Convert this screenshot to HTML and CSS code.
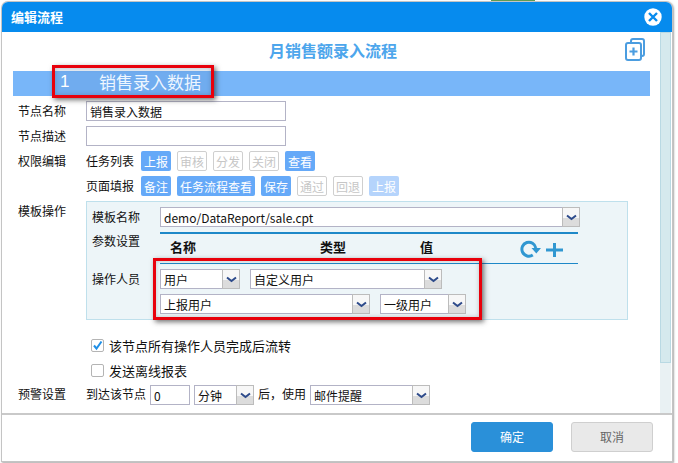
FILE: index.html
```html
<!DOCTYPE html>
<html lang="zh">
<head>
<meta charset="utf-8">
<title>编辑流程</title>
<link rel="stylesheet" href="styles.css">
</head>
<body>
<div class="peek"></div>
<div class="window">
  <header class="head">
    <span class="head-title">编辑流程</span>
    <span class="close">
      <svg width="18" height="18" viewBox="0 0 18 18"><circle cx="9" cy="9" r="8.7" fill="#fff"/><path d="M5 5l8 8M13 5l-8 8" stroke="#068bee" stroke-width="2.4" fill="none"/></svg>
    </span>
  </header>
  <div class="middle">
    <main class="content">
      <div class="title-row">
        <span></span>
        <h1 class="title">月销售额录入流程</h1>
        <span class="title-tool">
          <svg width="20" height="23" viewBox="0 0 20 23" fill="none" stroke="#4b9de0" stroke-width="2"><path d="M6 5V3a2 2 0 0 1 2-2h9a2 2 0 0 1 2 2v13a2 2 0 0 1-2 2h-1"/><rect x="1" y="5" width="15" height="17" rx="2"/><path d="M8.500 9.500v8M4.500 13.500h8" stroke-width="2.200"/></svg>
        </span>
      </div>
      <div class="band">
        <div class="callout callout-node">
          <span class="node-no">1</span>
          <span class="node-name">销售录入数据</span>
        </div>
      </div>

      <div class="row first">
        <label class="label">节点名称</label>
        <div class="input wide">销售录入数据</div>
      </div>
      <div class="row">
        <label class="label">节点描述</label>
        <div class="input wide"></div>
      </div>
      <div class="row">
        <label class="label">权限编辑</label>
        <span class="sub">任务列表</span>
        <div class="btns">
          <span class="btn on">上报</span><span class="btn off">审核</span><span class="btn off">分发</span><span class="btn off">关闭</span><span class="btn on">查看</span>
        </div>
      </div>
      <div class="row">
        <span class="label"></span>
        <span class="sub">页面填报</span>
        <div class="btns">
          <span class="btn on">备注</span><span class="btn on">任务流程查看</span><span class="btn on">保存</span><span class="btn off">通过</span><span class="btn off">回退</span><span class="btn faint">上报</span>
        </div>
      </div>

      <div class="row top">
        <label class="label label-panel">模板操作</label>
        <section class="panel">
          <div class="p-row">
            <span class="p-label">模板名称</span>
            <div class="sel s-tpl"><span class="val">demo/DataReport/sale.cpt</span><span class="arrow"><svg width="11" height="7" viewBox="0 0 11 7"><path d="M1 1.500l4.500 3.500 4.500-3.500" fill="none" stroke="#2d4a8a" stroke-width="2"/></svg></span></div>
          </div>
          <div class="p-row params">
            <span class="p-label p-label-param">参数设置</span>
            <div class="table-head">
              <b class="c1">名称</b><b class="c2">类型</b><b class="c3">值</b>
              <span class="tools">
                <svg width="44" height="18" viewBox="0 0 44 18" fill="none" stroke="#3097d1"><path d="M12.800 15A7 7 0 1 1 15.800 8" stroke-width="3"/><path d="M11.500 8h9.500l-4.700 5.500z" fill="#3097d1" stroke="none"/><path d="M34.500 3v14M26 10h17" stroke-width="3"/></svg>
              </span>
            </div>
          </div>
          <div class="p-row ops">
            <span class="p-label p-label-ops">操作人员</span>
            <div class="op-grid">
              <div class="op-line">
                <div class="sel s-a"><span class="val">用户</span><span class="arrow"><svg width="11" height="7" viewBox="0 0 11 7"><path d="M1 1.500l4.500 3.500 4.500-3.500" fill="none" stroke="#2d4a8a" stroke-width="2"/></svg></span></div>
                <div class="sel s-b"><span class="val">自定义用户</span><span class="arrow"><svg width="11" height="7" viewBox="0 0 11 7"><path d="M1 1.500l4.500 3.500 4.500-3.500" fill="none" stroke="#2d4a8a" stroke-width="2"/></svg></span></div>
              </div>
              <div class="op-line">
                <div class="sel s-c"><span class="val">上报用户</span><span class="arrow"><svg width="11" height="7" viewBox="0 0 11 7"><path d="M1 1.500l4.500 3.500 4.500-3.500" fill="none" stroke="#2d4a8a" stroke-width="2"/></svg></span></div>
                <div class="sel s-d"><span class="val">一级用户</span><span class="arrow"><svg width="11" height="7" viewBox="0 0 11 7"><path d="M1 1.500l4.500 3.500 4.500-3.500" fill="none" stroke="#2d4a8a" stroke-width="2"/></svg></span></div>
              </div>
              <div class="callout callout-ops"></div>
            </div>
          </div>
        </section>
      </div>

      <div class="check first-check">
        <span class="box"><svg width="11" height="11" viewBox="0 0 11 11"><path d="M2 5.500l2.500 3L9.500 1.500" fill="none" stroke="#1f8fe6" stroke-width="2"/></svg></span>
        <span>该节点所有操作人员完成后流转</span>
      </div>
      <div class="check second-check">
        <span class="box"></span>
        <span>发送离线报表</span>
      </div>

      <div class="row warn">
        <label class="label warn-text">预警设置</label>
        <span class="inline warn-text">到达该节点</span>
        <div class="input num">0</div>
        <div class="sel s-unit"><span class="val">分钟</span><span class="arrow"><svg width="11" height="7" viewBox="0 0 11 7"><path d="M1 1.500l4.500 3.500 4.500-3.500" fill="none" stroke="#2d4a8a" stroke-width="2"/></svg></span></div>
        <span class="inline after warn-text">后，使用</span>
        <div class="sel s-mail"><span class="val">邮件提醒</span><span class="arrow"><svg width="11" height="7" viewBox="0 0 11 7"><path d="M1 1.500l4.500 3.500 4.500-3.500" fill="none" stroke="#2d4a8a" stroke-width="2"/></svg></span></div>
      </div>
    </main>
    <div class="scrollbar"><div class="thumb"></div></div>
  </div>
  <footer class="foot">
    <span class="action primary">确定</span>
    <span class="action">取消</span>
  </footer>
</div>
</body>
</html>
```
FILE: styles.css
```css
* { box-sizing: border-box; }
html, body { margin: 0; height: 100%; }
body {
  width: 678px;
  height: 463px;
  overflow: hidden;
  position: relative;
  background: #fff;
  font-family: "Noto Sans CJK SC", "Liberation Sans", sans-serif;
  font-size: 12px;
  line-height: 20px;
  color: #111;
  padding: 2px 0 0 2px;
}
.peek {
  position: absolute;
  left: 491px;
  top: 0;
  width: 44px;
  height: 2px;
  background: #5a9a50;
}
.window {
  width: 670px;
  height: 459px;
  background: #fff;
  border-radius: 6px 6px 0 0;
  box-shadow: 0 0 0 1px #c4c4c4, 1px 1px 2px 1px #aaa;
  display: flex;
  flex-direction: column;
  position: relative;
}
.head {
  height: 30px;
  flex: none;
  background: #068bee;
  border-radius: 6px 6px 0 0;
  display: flex;
  align-items: center;
  justify-content: space-between;
  padding: 0 10px 0 9px;
  color: #fff;
}
.head-title { font-size: 13px; font-weight: 700; }
.close { display: flex; width: 18px; height: 18px; }
.middle { flex: none; height: 381px; display: flex; }
.content { width: 658px; padding-left: 11px; flex: none; }
.scrollbar { width: 11px; flex: none; background: #e9f1f3; }
.thumb { height: 331px; background: #d5e9ed; border: 1px solid #b9d9e3; }

.title-row {
  height: 39px;
  width: 637px;
  display: grid;
  grid-template-columns: 1fr auto 1fr;
  align-items: center;
  padding-bottom: 3px;
}
.title { margin: 0; font-size: 16px; font-weight: 700; line-height: 22px; color: #4da6ec; padding-left: 3px; }
.title-tool { display: flex; justify-content: flex-end; padding-right: 5px; align-self: start; padding-top: 6px; }

.band { height: 25px; width: 637px; background: #78b6f9; position: relative; }
.callout {
  position: absolute;
  border: 3px solid #e8000b;
  box-shadow: 2px 2px 5px rgba(40, 40, 40, .65), inset 0 0 4px rgba(40, 40, 40, .25);
}
.callout-node {
  left: 39px;
  top: -6px;
  width: 162px;
  height: 33px;
  display: flex;
  align-items: center;
  color: #fff;
  background: rgba(60, 110, 170, .12);
}
.node-no { font-size: 17px; width: 44px; padding-left: 5px; line-height: 24px; font-family: "Liberation Sans", sans-serif; }
.node-name { font-size: 17px; line-height: 24px; color: #eef6ff; margin-top: 1px; }

.row { display: flex; align-items: center; height: 20px; margin-top: 5px; }
.row.top { height: auto; align-items: flex-start; }
.label { width: 68px; margin-left: 5px; flex: none; line-height: 18px; }
.label-panel { padding-top: 1px; }
.sub { width: 55px; flex: none; }
.input {
  height: 20px;
  border: 1px solid #b3b3c6;
  background: #fff;
  padding: 0 3px;
  line-height: 19px;
  flex: none;
}
.wide { width: 200px; }
.num { width: 40px; margin-left: 4px; }
.inline { width: 60px; flex: none; margin-right: 0; }
.after { width: 56px; padding-left: 4px; }
.warn-text { margin-top: -3px; }
.btns { display: flex; gap: 6px; }
.btn {
  height: 20px;
  padding: 0 2px;
  min-width: 30px;
  text-align: center;
  border-radius: 2px;
  line-height: 19px;
  white-space: nowrap;
  border: 1px solid transparent;
}
.on { background: #65a9f8; color: #fff; }
.off { background: #fff; border-color: #cfcfcf; color: #c6c6c6; }
.faint { background: #b5d4fc; color: #fff; }

.panel {
  width: 542px;
  height: 119px;
  background: #edf5f8;
  border: 1px solid #bfe0ec;
  padding: 5px 0 0 5px;
}
.p-row { display: flex; align-items: flex-start; }
.p-label { width: 68px; flex: none; }
.p-label-param { margin-top: -1px; }
.params { margin-top: 5px; }
.ops { margin-top: 5px; }
.sel {
  height: 20px;
  display: flex;
  border: 1px solid #b3b3c6;
  background: #fff;
  flex: none;
}
.val { flex: 1; padding: 0 3px; line-height: 19px; white-space: nowrap; overflow: hidden; }
.arrow {
  width: 18px;
  flex: none;
  margin: -1px -1px -1px 0;
  height: 20px;
  border: 1px solid #bcbcbc;
  background: linear-gradient(#f7f7f7 0 55%, #dcdcdc 55% 100%);
  display: flex;
  justify-content: center;
  padding-top: 6px;
  box-sizing: border-box;
}
.s-tpl { width: 420px; }
.s-a { width: 80px; }
.s-b { width: 192px; }
.s-c { width: 210px; }
.s-d { width: 86px; }
.s-unit { width: 60px; margin-left: 4px; }
.s-mail { width: 120px; }
.table-head {
  width: 418px;
  height: 32px;
  border-top: 2px solid #1e88c8;
  border-bottom: 1px solid #1e88c8;
  position: relative;
  display: grid;
  grid-template-columns: 150px 100px 1fr;
  padding: 3px 0 0 10px;
  overflow: visible;
}
.table-head b { font-size: 13px; font-weight: 700; line-height: 20px; }
.tools { position: absolute; left: 360px; top: 6px; display: flex; }
.op-grid { display: flex; flex-direction: column; gap: 5px; position: relative; }
.op-line { display: flex; gap: 10px; }
.callout-ops {
  left: -7px;
  top: -11px;
  width: 329px;
  height: 62px;
}

.check { display: flex; align-items: center; font-size: 13px; line-height: 18px; padding-left: 78px; gap: 5px; height: 13px; }
.first-check { margin-top: 19px; }
.second-check { margin-top: 12px; }
.box {
  width: 13px;
  height: 13px;
  border: 1px solid #b4b4b4;
  border-radius: 2px;
  background: #fff;
  flex: none;
  display: flex;
  align-items: center;
  justify-content: center;
}
.warn { margin-top: 8px; }
.foot {
  flex: 1;
  border-top: 2px solid #c9c9c9;
  display: flex;
  justify-content: flex-end;
  align-items: flex-start;
  gap: 18px;
  padding: 7px 19px 0 0;
}
.action {
  width: 82px;
  height: 30px;
  border-radius: 3px;
  background: #e9e9e9;
  border: 1px solid #cfcfcf;
  color: #666;
  text-align: center;
  line-height: 28px;
}
.primary { background: #2a90d9; border-color: #2a90d9; color: #fff; }
```
